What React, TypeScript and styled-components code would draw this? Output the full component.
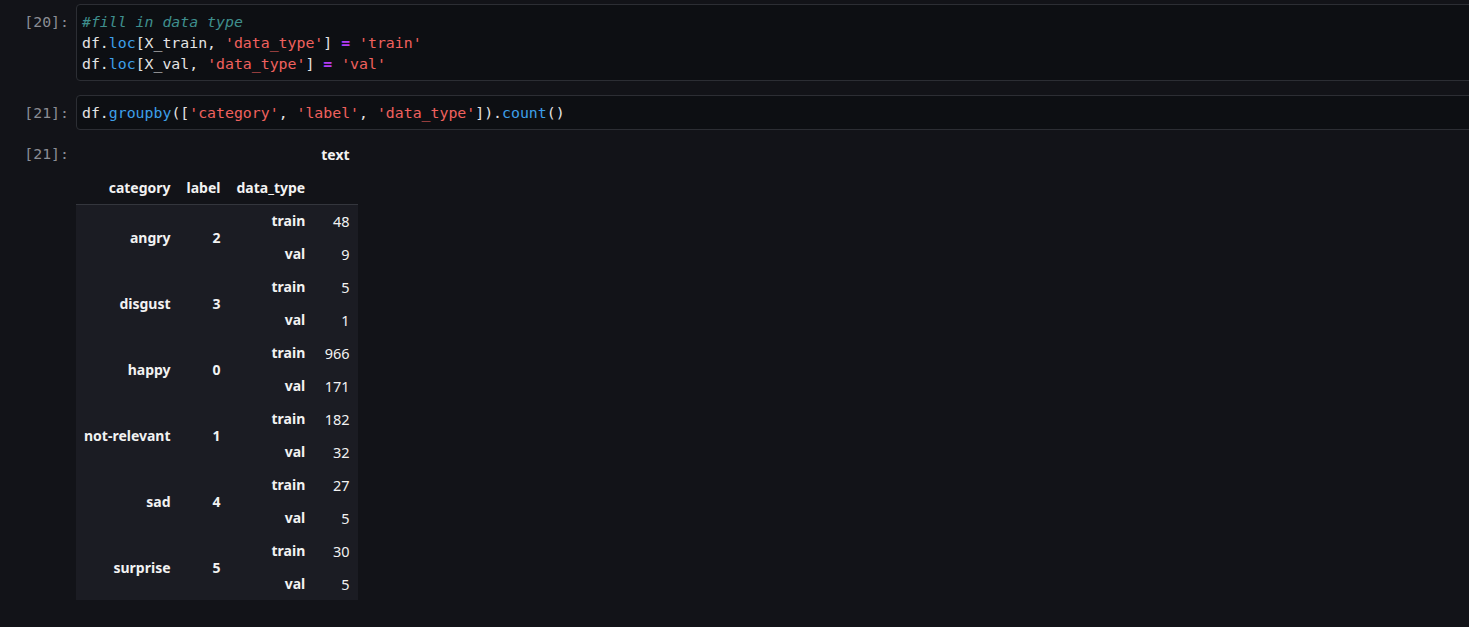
import React from "react";
import styled, { createGlobalStyle } from "styled-components";

const Global = createGlobalStyle`
  html, body { margin: 0; padding: 0; background: #121318; overflow: hidden; }
  body { font-family: "Noto Sans", sans-serif; color: #f0f0f0; }
`;

const Notebook = styled.div`
  display: flex;
  flex-direction: column;
  padding-top: 4px;
  width: calc(100% + 10px);
`;

const Cell = styled.div<{ $gap?: number }>`
  display: flex;
  align-items: flex-start;
  margin-bottom: ${(p) => p.$gap ?? 0}px;
`;

const Prompt = styled.div<{ $top?: number }>`
  flex: 0 0 76px;
  box-sizing: border-box;
  padding-right: 7px;
  padding-top: ${(p) => p.$top ?? 8}px;
  text-align: right;
  font-family: "DejaVu Sans Mono", monospace;
  font-size: 14.85px;
  line-height: 21px;
  color: #8a8d94;
`;

const InputBox = styled.pre`
  flex: 1;
  margin: 0;
  padding: 7px 5px 5px;
  border: 1px solid #2c2e34;
  border-radius: 4px;
  background: #0d0f13;
  font-family: "DejaVu Sans Mono", monospace;
  font-size: 14.85px;
  line-height: 21px;
  color: #e4e4e4;
  white-space: pre;
`;

const Comment = styled.span`
  color: #3f8f8e;
  font-style: italic;
`;
const Fn = styled.span`
  color: #3d9fe9;
`;
const Str = styled.span`
  color: #f0615e;
`;
const Op = styled.span`
  color: #b33cf5;
  font-weight: bold;
`;

const Output = styled.div`
  display: flex;
  align-items: flex-start;
  margin-top: 8px;
`;

const Table = styled.table`
  border-collapse: collapse;
  font-size: 14px;
  color: #f2f2f2;
`;

const Head = styled.thead``;
const Body = styled.tbody`
  background: #1b1c23;
`;

const HeadRow = styled.tr<{ $line?: boolean }>`
  height: 33px;
  border-bottom: ${(p) => (p.$line ? "1px solid #34363d" : "none")};
`;

const Row = styled.tr`
  height: 33px;
`;

const Th = styled.th`
  padding: 0 8px;
  text-align: right;
  vertical-align: middle;
  font-weight: bold;
  white-space: nowrap;
`;

const Td = styled.td`
  padding: 0 8px;
  text-align: right;
  vertical-align: middle;
  font-weight: normal;
  font-size: 14.5px;
`;

type Group = { cat: string; label: string; train: number; val: number };

const groups: Group[] = [
  { cat: "angry", label: "2", train: 48, val: 9 },
  { cat: "disgust", label: "3", train: 5, val: 1 },
  { cat: "happy", label: "0", train: 966, val: 171 },
  { cat: "not-relevant", label: "1", train: 182, val: 32 },
  { cat: "sad", label: "4", train: 27, val: 5 },
  { cat: "surprise", label: "5", train: 30, val: 5 },
];

export default function App() {
  return (
    <>
      <Global />
      <Notebook>
        <Cell $gap={14}>
          <Prompt>[20]:</Prompt>
          <InputBox>
            <Comment>#fill in data type</Comment>
            {"\n"}df.<Fn>loc</Fn>[X_train, <Str>'data_type'</Str>] <Op>=</Op> <Str>'train'</Str>
            {"\n"}df.<Fn>loc</Fn>[X_val, <Str>'data_type'</Str>] <Op>=</Op> <Str>'val'</Str>
          </InputBox>
        </Cell>
        <Cell>
          <Prompt>[21]:</Prompt>
          <InputBox>
            df.<Fn>groupby</Fn>([<Str>'category'</Str>, <Str>'label'</Str>, <Str>'data_type'</Str>]).<Fn>count</Fn>()
          </InputBox>
        </Cell>
        <Output>
          <Prompt $top={6}>[21]:</Prompt>
          <Table>
            <Head>
              <HeadRow>
                <Th></Th>
                <Th></Th>
                <Th></Th>
                <Th>text</Th>
              </HeadRow>
              <HeadRow $line>
                <Th>category</Th>
                <Th>label</Th>
                <Th>data_type</Th>
                <Th></Th>
              </HeadRow>
            </Head>
            <Body>
              {groups.map((g) => (
                <React.Fragment key={g.cat}>
                  <Row>
                    <Th rowSpan={2}>{g.cat}</Th>
                    <Th rowSpan={2}>{g.label}</Th>
                    <Th>train</Th>
                    <Td>{g.train}</Td>
                  </Row>
                  <Row>
                    <Th>val</Th>
                    <Td>{g.val}</Td>
                  </Row>
                </React.Fragment>
              ))}
            </Body>
          </Table>
        </Output>
      </Notebook>
    </>
  );
}
